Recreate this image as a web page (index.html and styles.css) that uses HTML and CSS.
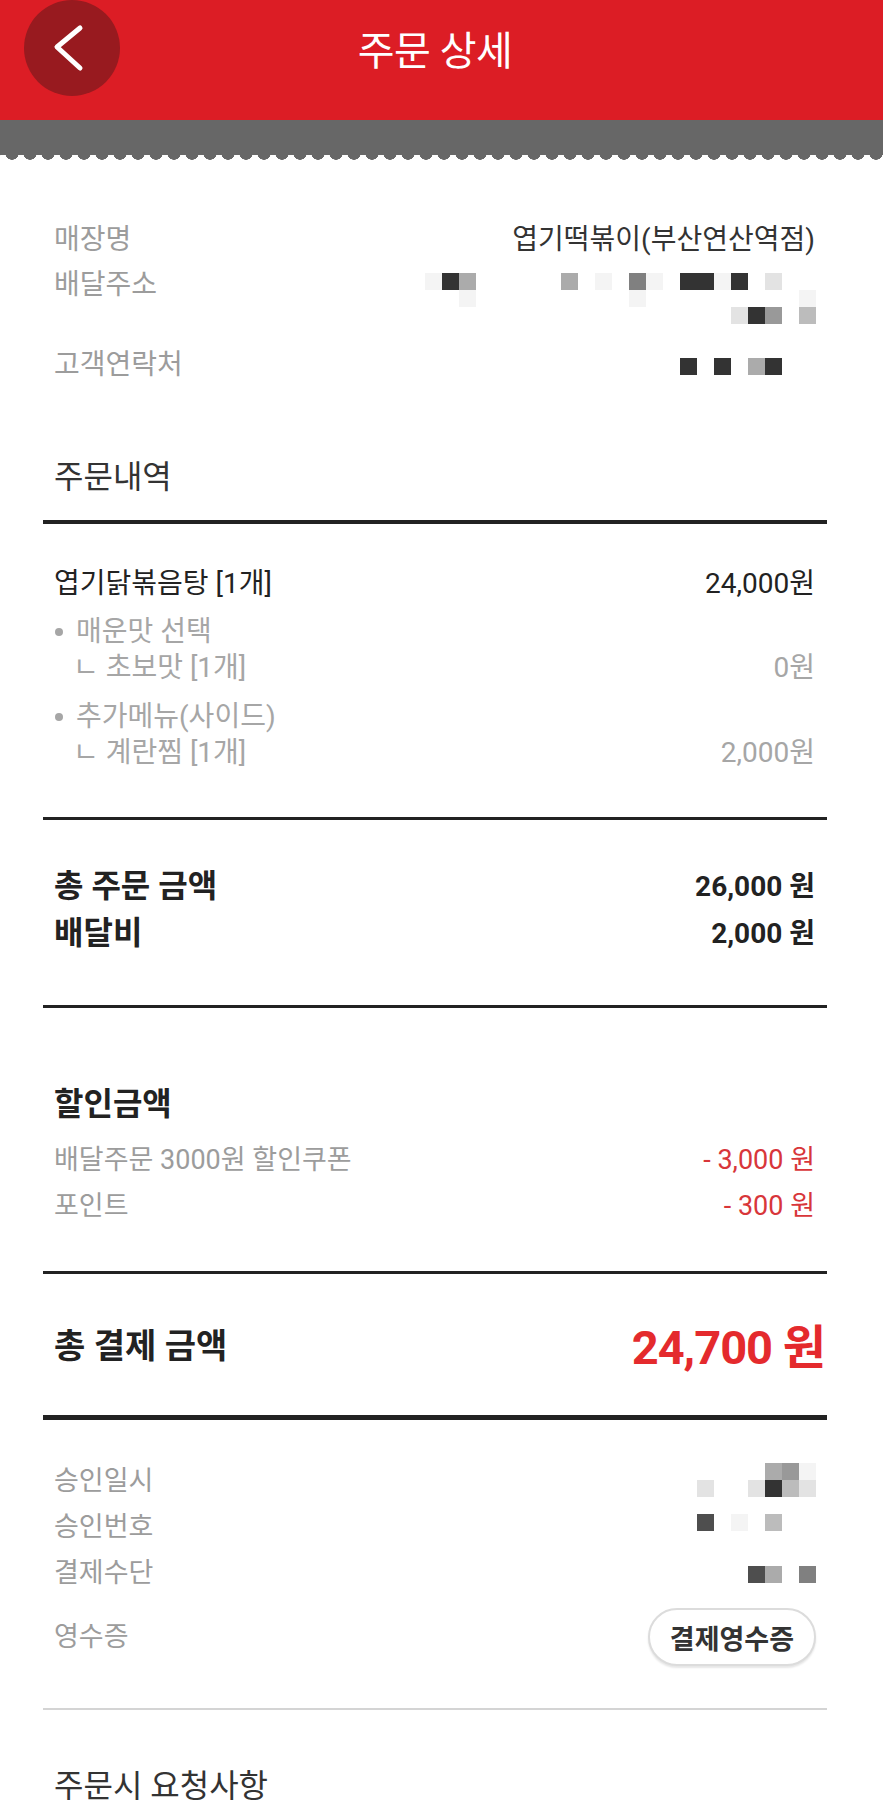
FILE: index.html
```html
<!DOCTYPE html>
<html lang="ko">
<head>
	<meta charset="utf-8">
	<meta name="viewport" content="width=device-width, initial-scale=1">
	<title>주문 상세</title>
	<link rel="stylesheet" href="styles.css">
</head>

<body>
	<header class="topbar">
		<div class="bar">
			<button class="back" aria-label="뒤로">
				<svg viewBox="0 0 96 96" width="96" height="96"><polyline points="56,28 33,47 56,68" fill="none" stroke="#fff" stroke-width="5" stroke-linecap="round" stroke-linejoin="round"/></svg>
			</button>
			<h1 class="title">주문 상세</h1>
		</div>
		<div class="band"></div>
	</header>

	<main class="detail">
		<!-- 매장 / 배달 정보 -->
		<section class="block info">
			<div class="row"><span class="label">매장명</span><span class="value">엽기떡볶이(부산연산역점)</span></div>
			<div class="row addr">
				<span class="label">배달주소</span>
				<div class="mosaic">
					<div class="m-row"><i class="f"></i><i class="d"></i><i class="m"></i><i></i><i></i><i></i><i></i><i></i><i class="m"></i><i></i><i class="f"></i><i></i><i class="g"></i><i class="f"></i><i></i><i class="d"></i><i class="d"></i><i class="f"></i><i class="d"></i><i></i><i class="l"></i><i></i><i></i></div>
					<div class="m-row"><i class="f"></i><i></i><i></i><i></i><i></i><i></i><i></i><i></i><i></i><i></i><i class="f"></i><i></i><i></i><i></i><i></i><i></i><i></i><i></i><i></i><i></i><i class="f"></i></div>
					<div class="m-row"><i class="l"></i><i class="d"></i><i class="s"></i><i></i><i class="b"></i></div>
				</div>
			</div>
			<div class="row phone">
				<span class="label">고객연락처</span>
				<div class="mosaic">
					<div class="m-row"><i class="d"></i><i></i><i class="d"></i><i></i><i class="m"></i><i class="d"></i><i></i><i></i></div>
				</div>
			</div>
		</section>

		<h2 class="block section-title">주문내역</h2>

		<!-- 주문 메뉴 -->
		<section class="block items">
			<div class="row item"><span>엽기닭볶음탕 [1개]</span><span class="value">24,000원</span></div>
			<div class="opt-group">
				<div class="opt"><span class="dot"></span>매운맛 선택</div>
				<div class="row choice"><span>ㄴ 초보맛 [1개]</span><span>0원</span></div>
			</div>
			<div class="opt-group">
				<div class="opt"><span class="dot"></span>추가메뉴(사이드)</div>
				<div class="row choice"><span>ㄴ 계란찜 [1개]</span><span>2,000원</span></div>
			</div>
		</section>

		<section class="block totals">
			<div class="row"><span class="sum-label">총 주문 금액</span><span class="sum-value">26,000 원</span></div>
			<div class="row"><span class="sum-label">배달비</span><span class="sum-value">2,000 원</span></div>
		</section>

		<section class="block discount">
			<h3 class="disc-title">할인금액</h3>
			<div class="disc-list">
				<div class="row"><span class="label">배달주문 3000원 할인쿠폰</span><span class="minus">- 3,000 원</span></div>
				<div class="row"><span class="label">포인트</span><span class="minus">- 300 원</span></div>
			</div>
		</section>

		<section class="block grand">
			<div class="row"><span class="grand-label">총 결제 금액</span><span class="grand-value">24,700 원</span></div>
		</section>

		<!-- 결제 정보 -->
		<section class="block approval">
			<div class="row paid-at">
				<span class="label">승인일시</span>
				<div class="mosaic">
					<div class="m-row"><i class="m"></i><i class="s"></i><i class="f"></i></div>
					<div class="m-row"><i class="l"></i><i></i><i></i><i class="l"></i><i class="d"></i><i class="b"></i><i class="l"></i></div>
				</div>
			</div>
			<div class="row paid-no">
				<span class="label">승인번호</span>
				<div class="mosaic">
					<div class="m-row"><i class="k"></i><i></i><i class="f"></i><i></i><i class="b"></i><i></i><i></i></div>
				</div>
			</div>
			<div class="row paid-by">
				<span class="label">결제수단</span>
				<div class="mosaic">
					<div class="m-row"><i class="k"></i><i class="m"></i><i></i><i class="g"></i></div>
				</div>
			</div>
			<div class="row receipt">
				<span class="label">영수증</span>
				<button class="receipt-btn">결제영수증</button>
			</div>
		</section>

		<section class="block request">
			<h3 class="request-title">주문시 요청사항</h3>
		</section>
	</main>
</body>
</html>
```

FILE: styles.css
```css
body {
	margin: 0;
	background: #fff;
	font-family: Roboto, "Noto Sans CJK KR", sans-serif;
	color: #333;
	overflow: hidden;
}

h1, h2, h3 {
	margin: 0;
	font-weight: normal;
}

/* 상단 바 */
.bar {
	display: flex;
	align-items: center;
	height: 120px;
	background: #dc1d25;
}
.back {
	flex: none;
	width: 96px;
	height: 96px;
	margin: 0 0 24px 24px;
	padding: 0;
	border: 0;
	border-radius: 50%;
	background: #981a1f;
}
.back svg {
	display: block;
}
.title {
	flex: 1;
	margin: 0 133px 24px 0;
	text-align: center;
	color: #fff;
	font-size: 40px;
	font-weight: 400;
	letter-spacing: -0.5px;
}
.band {
	height: 41px;
	background:
		linear-gradient(#676767, #676767) top / 100% 35px no-repeat,
		radial-gradient(circle 7px at 50% -2px, #676767 6.5px, transparent 7px) 3px 35px / 18px 6px repeat-x;
}

/* 본문 */
.detail {
	margin: 0 56px 0 43px;
}
.block {
	padding: 0 12px 0 11px;
}
.row {
	display: flex;
	justify-content: space-between;
	align-items: flex-start;
}
.label {
	color: #9c9c9c;
}

.info {
	padding-top: 56px;
	font-size: 28px;
	line-height: 45px;
}
.info .value {
	color: #333;
}
.addr .mosaic {
	margin-top: 11px;
}
.phone {
	margin-top: 18px;
}
.phone .mosaic {
	margin-top: 16px;
}

.mosaic {
	display: flex;
	flex-direction: column;
	align-items: flex-end;
	margin-right: -1px;
}
.m-row {
	display: flex;
}
.mosaic i {
	width: 17px;
	height: 17px;
}
.mosaic .d { background: #333; }
.mosaic .k { background: #4e4e4e; }
.mosaic .g { background: #808080; }
.mosaic .s { background: #999; }
.mosaic .m { background: #ababab; }
.mosaic .b { background: #bcbcbc; }
.mosaic .l { background: #e3e3e3; }
.mosaic .f { background: #f4f4f4; }

.section-title {
	margin-top: 70px;
	padding-bottom: 23px;
	border-bottom: 4px solid #222;
	font-size: 32px;
	line-height: 40px;
	color: #333;
}

.items {
	padding-top: 42px;
	padding-bottom: 46px;
	border-bottom: 3px solid #222;
	font-size: 28px;
	line-height: 36px;
}
.item {
	color: #222;
}
.opt-group {
	margin-top: 12px;
	color: #a6a6a6;
}
.opt-group + .opt-group {
	margin-top: 13px;
}
.opt {
	display: flex;
	align-items: center;
}
.dot {
	width: 8px;
	height: 8px;
	margin: 0 13px 0 1px;
	border-radius: 50%;
	background: #a6a6a6;
}
.choice {
	padding-left: 19px;
}

.totals {
	padding-top: 43px;
	padding-bottom: 48px;
	border-bottom: 3px solid #222;
	line-height: 47px;
	color: #222;
	font-weight: 700;
}
.sum-label {
	font-size: 32px;
}
.sum-value {
	font-size: 28px;
}

.discount {
	padding-top: 73px;
	padding-bottom: 42px;
	border-bottom: 3px solid #222;
}
.disc-title {
	font-size: 32px;
	font-weight: 700;
	line-height: 46px;
	color: #222;
}
.disc-list {
	margin-top: 10px;
	font-size: 27px;
	line-height: 46px;
}
.minus {
	color: #d8363a;
}

.grand {
	padding-top: 39px;
	padding-bottom: 42px;
	border-bottom: 5px solid #222;
}
.grand .row {
	align-items: center;
	height: 60px;
}
.grand-label {
	font-size: 34px;
	font-weight: 700;
	color: #222;
}
.grand-value {
	margin-right: -10px;
	font-size: 47px;
	font-weight: 700;
	letter-spacing: -1px;
	color: #e42a2d;
}

.approval {
	padding-top: 38px;
	padding-bottom: 42px;
	border-bottom: 2px solid #d4d4d4;
	font-size: 27px;
	line-height: 46px;
}
.paid-at .mosaic {
	margin-top: 5px;
}
.paid-no .mosaic {
	margin-top: 10px;
}
.paid-by .mosaic {
	margin-top: 16px;
}
.receipt {
	align-items: center;
	margin-top: 12px;
}
.receipt-btn {
	height: 58px;
	padding: 0 20px;
	margin-right: -1px;
	border: 2px solid #dcdcdc;
	border-radius: 29px;
	background: #fff;
	box-shadow: 0 2px 2px rgba(0, 0, 0, 0.1);
	font-family: inherit;
	font-size: 27px;
	font-weight: 700;
	color: #333;
}

.request {
	padding-top: 56px;
}
.request-title {
	font-size: 32px;
	line-height: 40px;
	color: #333;
}
```
